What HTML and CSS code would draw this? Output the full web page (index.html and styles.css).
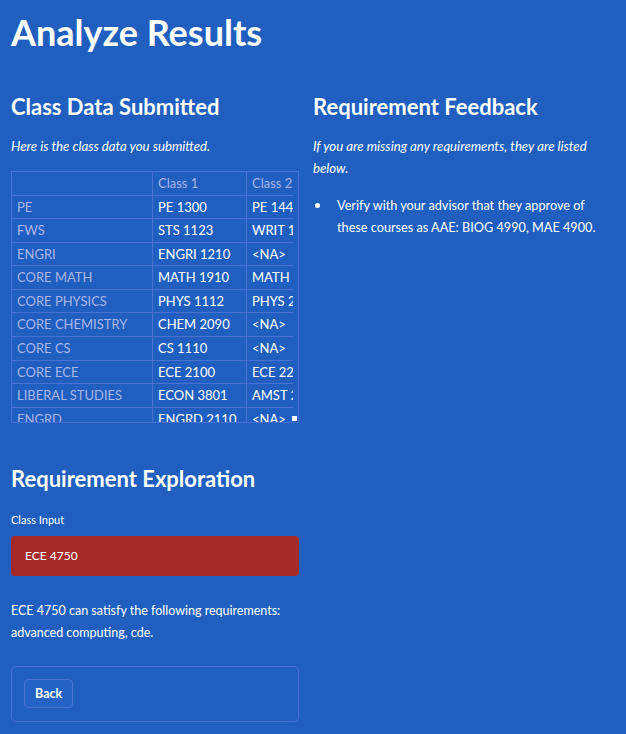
FILE: index.html
```html
<!DOCTYPE html>
<html>
<head>
<meta charset="utf-8">
<link rel="stylesheet" href="styles.css">
</head>
<body>
<main class="page">
  <h1 class="title">Analyze Results</h1>
  <div class="columns">
    <section class="col">
      <h2 class="heading">Class Data Submitted</h2>
      <p class="note">Here is the class data you submitted.</p>
      <div class="grid-frame">
        <div class="grid-clip">
          <div class="grid">
            <div class="row head"><div class="c c1"></div><div class="c c2">Class 1</div><div class="c c3">Class 2</div></div>
            <div class="row"><div class="c c1">PE</div><div class="c c2">PE 1300</div><div class="c c3">PE 1441</div></div>
            <div class="row"><div class="c c1">FWS</div><div class="c c2">STS 1123</div><div class="c c3">WRIT 1420</div></div>
            <div class="row"><div class="c c1">ENGRI</div><div class="c c2">ENGRI 1210</div><div class="c c3">&lt;NA&gt;</div></div>
            <div class="row"><div class="c c1">CORE MATH</div><div class="c c2">MATH 1910</div><div class="c c3">MATH 1920</div></div>
            <div class="row"><div class="c c1">CORE PHYSICS</div><div class="c c2">PHYS 1112</div><div class="c c3">PHYS 2213</div></div>
            <div class="row"><div class="c c1">CORE CHEMISTRY</div><div class="c c2">CHEM 2090</div><div class="c c3">&lt;NA&gt;</div></div>
            <div class="row"><div class="c c1">CORE CS</div><div class="c c2">CS 1110</div><div class="c c3">&lt;NA&gt;</div></div>
            <div class="row"><div class="c c1">CORE ECE</div><div class="c c2">ECE 2100</div><div class="c c3">ECE 2200</div></div>
            <div class="row"><div class="c c1">LIBERAL STUDIES</div><div class="c c2">ECON 3801</div><div class="c c3">AMST 2000</div></div>
            <div class="row"><div class="c c1">ENGRD</div><div class="c c2">ENGRD 2110</div><div class="c c3">&lt;NA&gt;</div></div>
          </div>
        </div>
        <span class="corner"></span>
      </div>
    </section>
    <section class="col">
      <h2 class="heading">Requirement Feedback</h2>
      <p class="note">If you are missing any requirements, they are listed below.</p>
      <ul class="feedback">
        <li>Verify with your advisor that they approve of these courses as AAE: BIOG 4990, MAE 4900.</li>
      </ul>
    </section>
  </div>
  <section class="explore">
    <h2 class="heading">Requirement Exploration</h2>
    <label class="label">Class Input</label>
    <div class="input">ECE 4750</div>
    <p class="result">ECE 4750 can satisfy the following requirements: advanced computing, cde.</p>
    <form class="form">
      <button type="button" class="btn">Back</button>
    </form>
  </section>
</main>
</body>
</html>
```
FILE: styles.css
```css
* { box-sizing: border-box; }
html, body {
  margin: 0;
  background: #205fbf;
  color: #ffffff;
  font-family: Lato, "Open Sans", sans-serif;
}
.page {
  padding: 9px 11px 0 11px;
  width: 626px;
}
.title {
  margin: 0;
  font-size: 36px;
  font-weight: 700;
  line-height: 46px;
}
.columns {
  display: grid;
  grid-template-columns: 288px 288px;
  column-gap: 14px;
  margin-top: 37px;
}
.heading {
  margin: 0;
  font-size: 22px;
  font-weight: 700;
  line-height: 30px;
}
.note {
  margin: 13px 0 0 0;
  font-size: 13.2px;
  font-style: italic;
  line-height: 22px;
}
.grid-frame {
  position: relative;
  margin-top: 14px;
  width: 288px;
  height: 252px;
  border: 1px solid #4a70d2;
}
.grid-clip {
  width: 281px;
  height: 250px;
  overflow: hidden;
}
.grid {
  width: 360px;
}
.row {
  display: flex;
  height: 23.57px;
  border-bottom: 1px solid #4a70d2;
  font-size: 13px;
  line-height: 23px;
}
.c {
  padding-left: 5px;
  white-space: nowrap;
  overflow: hidden;
}
.c1 { width: 141px; color: #a9b6e8; border-right: 1px solid #4a70d2; }
.c2 { width: 94px; border-right: 1px solid #4a70d2; }
.c3 { width: 120px; }
.head .c { color: #a9b6e8; }
.corner {
  position: absolute;
  right: 1px;
  bottom: 1px;
  width: 5px;
  height: 5px;
  background: #ffffff;
}
.feedback {
  margin: 15px 0 0 0;
  padding: 0;
  list-style: none;
  font-size: 12.7px;
  line-height: 22px;
}
.feedback li {
  display: flex;
}
.feedback li::before {
  content: "";
  flex-shrink: 0;
  width: 5px;
  height: 5px;
  border-radius: 50%;
  background: #ffffff;
  margin: 9px 17px 0 2px;
}
.explore {
  width: 288px;
  margin-top: 41px;
}
.label {
  display: block;
  margin-top: 18px;
  font-size: 11px;
  line-height: 16px;
}
.input {
  margin-top: 8px;
  height: 40px;
  background: #a52a2a;
  border-radius: 4px;
  padding-left: 14px;
  font-size: 12px;
  line-height: 40px;
}
.result {
  margin: 24px 0 0 0;
  font-size: 12.5px;
  line-height: 22px;
}
.form {
  margin-top: 22px;
  border: 1px solid #4a70d2;
  border-radius: 5px;
  height: 56px;
  padding: 12px 0 0 12px;
}
.btn {
  height: 29px;
  padding: 0 10px;
  background: #2462c6;
  border: 1px solid #4a70d2;
  border-radius: 4px;
  color: #ffffff;
  font-family: inherit;
  font-size: 12.5px;
  font-weight: 700;
}
```
